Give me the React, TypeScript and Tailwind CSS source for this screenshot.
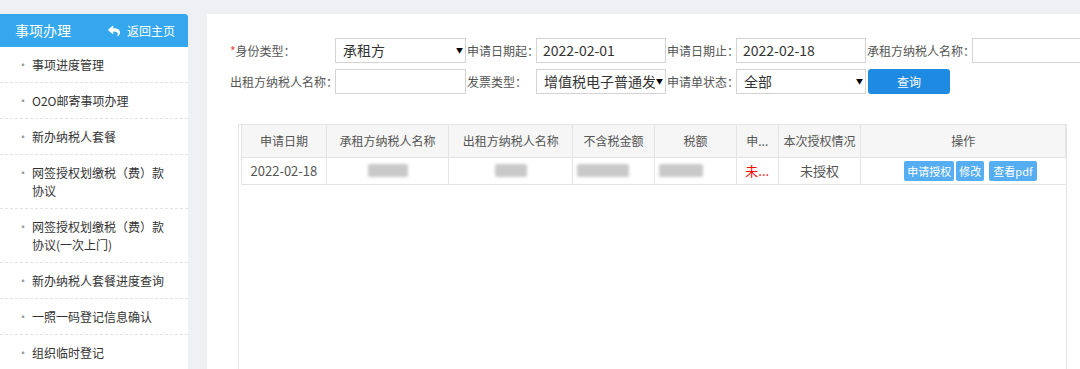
import { FaReply } from "react-icons/fa";

const menu = [
  "事项进度管理",
  "O2O邮寄事项办理",
  "新办纳税人套餐",
  "网签授权划缴税（费）款协议",
  "网签授权划缴税（费）款协议(一次上门)",
  "新办纳税人套餐进度查询",
  "一照一码登记信息确认",
  "组织临时登记",
];

const cols = [
  { title: "申请日期", w: 85 },
  { title: "承租方纳税人名称", w: 123 },
  { title: "出租方纳税人名称", w: 124 },
  { title: "不含税金额", w: 82 },
  { title: "税额", w: 82 },
  { title: "申...", w: 42 },
  { title: "本次授权情况", w: 83 },
  { title: "操作", w: 205 },
];

function Blur({ w, left }: { w: number; left?: boolean }) {
  return (
    <div className={left ? "flex justify-start pl-[4px]" : "flex justify-center"}>
      <div className="h-[13px] rounded-[2px] bg-[#c9c9c9] blur-[1.5px]" style={{ width: w }} />
    </div>
  );
}

function Select({ value, w }: { value: string; w: string }) {
  return (
    <div className={`flex h-[25px] shrink-0 ${w} items-center border border-[#d4d4d4] pl-[7px] pr-[1px] text-[14px] whitespace-nowrap text-[#333]`}>
      <span className="min-w-0 flex-1 overflow-hidden">{value}</span>
      <span className="w-[9px] shrink-0 text-center text-[7px] text-black">▼</span>
    </div>
  );
}

function Input({ value, w }: { value?: string; w: string }) {
  return (
    <div className={`flex h-[25px] shrink-0 ${w} items-center border border-[#d4d4d4] pl-[6px] text-[14px] text-[#333]`}>
      {value}
    </div>
  );
}

export default function App() {
  return (
    <div
      className="flex h-[369px] w-[1080px] overflow-hidden bg-[#eef0f3] pt-[14px]"
      style={{ fontFamily: "'Noto Sans CJK SC', sans-serif" }}
    >
      {/* Sidebar */}
      <aside className="w-[188px] shrink-0 bg-white">
        <div className="flex h-[33px] items-center justify-between rounded-tr-[3px] bg-[#35a7ee] pl-[15px] pr-[13px] text-white">
          <span className="text-[14px]">事项办理</span>
          <span className="flex items-center gap-[7px] text-[12px]">
            <FaReply className="text-[12px]" />
            返回主页
          </span>
        </div>
        <ul>
          {menu.map((m) => (
            <li
              key={m}
              className="flex border-b border-dashed border-[#e2e2e2] pb-[8px] pl-[17px] pt-[9px] text-[12px] leading-[18px] text-[#333]"
            >
              <span className="w-[15px] text-[#999]">•</span>
              <span className="w-[140px]">{m}</span>
            </li>
          ))}
        </ul>
      </aside>

      {/* Main panel */}
      <main className="ml-[19px] flex min-w-0 flex-1 flex-col overflow-hidden bg-white pt-[24px] text-[12px] text-[#555]">
        <div className="flex items-center whitespace-nowrap pl-[23px]">
          <span className="w-[105px] shrink-0">
            <span className="text-[#f44]">*</span>身份类型：
          </span>
          <Select value="承租方" w="w-[131px]" />
          <span className="w-[70px] shrink-0 pl-[1px]">申请日期起：</span>
          <Input value="2022-02-01" w="w-[130px]" />
          <span className="w-[70px] shrink-0 pl-[1px]">申请日期止：</span>
          <Input value="2022-02-18" w="w-[130px]" />
          <span className="w-[106px] shrink-0 pl-[1px]">承租方纳税人名称：</span>
          <Input w="w-[130px]" />
        </div>
        <div className="mt-[6px] flex items-center whitespace-nowrap pl-[23px]">
          <span className="w-[105px] shrink-0">出租方纳税人名称：</span>
          <Input w="w-[131px]" />
          <span className="w-[70px] shrink-0 pl-[1px]">发票类型：</span>
          <Select value="增值税电子普通发票" w="w-[130px]" />
          <span className="w-[70px] shrink-0 pl-[1px]">申请单状态：</span>
          <Select value="全部" w="w-[130px]" />
          <button className="ml-[2px] h-[25px] w-[82px] shrink-0 rounded-[3px] bg-[#1f8ae2] text-[12px] text-white">
            查询
          </button>
        </div>

        {/* Table */}
        <div className="ml-[31px] mt-[30px] w-[829px] flex-1 border-x border-t border-[#e4e4e4]">
          <table className="ml-[2px] table-fixed border-collapse border-l border-[#e4e4e4] text-center">
            <colgroup>
              {cols.map((c) => (
                <col key={c.title} style={{ width: c.w }} />
              ))}
            </colgroup>
            <thead>
              <tr className="h-[32px] bg-[#f6f6f6]">
                {cols.map((c) => (
                  <th key={c.title} className="border-b border-r border-[#e4e4e4] font-normal text-[#555]">
                    {c.title}
                  </th>
                ))}
              </tr>
            </thead>
            <tbody>
              <tr className="h-[27px] text-[#555]">
                <td className="border-b border-r border-[#e4e4e4] text-[13px]">2022-02-18</td>
                <td className="border-b border-r border-[#e4e4e4]">
                  <Blur w={40} />
                </td>
                <td className="border-b border-r border-[#e4e4e4]">
                  <Blur w={32} />
                </td>
                <td className="border-b border-r border-[#e4e4e4]">
                  <Blur w={52} left />
                </td>
                <td className="border-b border-r border-[#e4e4e4]">
                  <Blur w={44} left />
                </td>
                <td className="border-b border-r border-[#e4e4e4] text-[13px] text-[#f00]">未...</td>
                <td className="border-b border-r border-[#e4e4e4] text-[13px]">未授权</td>
                <td className="border-b border-[#e4e4e4]">
                  <div className="flex justify-center gap-[2px] pl-[14px] text-[11px] text-white">
                    <span className="rounded-[2px] bg-[#55adf2] px-[3px] leading-[20px]">申请授权</span>
                    <span className="rounded-[2px] bg-[#55adf2] px-[3px] leading-[20px]">修改</span>
                    <span className="ml-[3px] rounded-[2px] bg-[#55adf2] px-[4px] leading-[20px]">查看pdf</span>
                  </div>
                </td>
              </tr>
            </tbody>
          </table>
        </div>
      </main>
    </div>
  );
}
